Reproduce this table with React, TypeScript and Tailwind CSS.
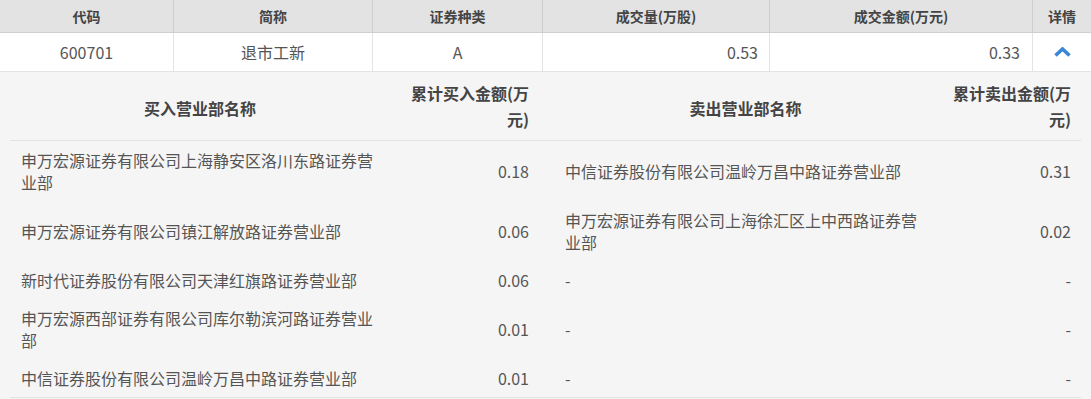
import React from 'react'

const buys = [
  { name: '申万宏源证券有限公司上海静安区洛川东路证券营业部', amt: '0.18' },
  { name: '申万宏源证券有限公司镇江解放路证券营业部', amt: '0.06' },
  { name: '新时代证券股份有限公司天津红旗路证券营业部', amt: '0.06' },
  { name: '申万宏源西部证券有限公司库尔勒滨河路证券营业部', amt: '0.01' },
  { name: '中信证券股份有限公司温岭万昌中路证券营业部', amt: '0.01' },
]

const sells = [
  { name: '中信证券股份有限公司温岭万昌中路证券营业部', amt: '0.31' },
  { name: '申万宏源证券有限公司上海徐汇区上中西路证券营业部', amt: '0.02' },
  { name: '-', amt: '-' },
  { name: '-', amt: '-' },
  { name: '-', amt: '-' },
]

const cols = 'grid grid-cols-[174px_199px_170px_227px_263px_58px]'

export default function App() {
  return (
    <div
      className="w-[1091px] h-[399px] bg-[#f5f5f5] text-[#555]"
      style={{ fontFamily: '"Noto Sans CJK SC", "Liberation Sans", sans-serif' }}
    >
      {/* summary table */}
      <div className={`${cols} h-[33px] bg-[#e3e3e3] border-b border-[#cfcfcf] text-[14px] font-bold text-[#444]`}>
        {['代码', '简称', '证券种类', '成交量(万股)', '成交金额(万元)', '详情'].map((h, i) => (
          <div
            key={h}
            className={`flex items-center justify-center ${i < 5 ? 'border-r border-[#cfcfcf]' : ''}`}
          >
            {h}
          </div>
        ))}
      </div>
      <div className={`${cols} h-[39px] bg-white border-b border-[#e3e3e3] text-[16px]`}>
        <div className="flex items-center justify-center border-r border-[#e3e3e3]">600701</div>
        <div className="flex items-center justify-center border-r border-[#e3e3e3]">退市工新</div>
        <div className="flex items-center justify-center border-r border-[#e3e3e3]">A</div>
        <div className="flex items-center justify-end pr-[11px] border-r border-[#e3e3e3]">0.53</div>
        <div className="flex items-center justify-end pr-[12px] border-r border-[#e3e3e3]">0.33</div>
        <div className="flex items-center justify-center">
          <svg width="17" height="10" viewBox="0 0 17 10">
            <polyline points="1.5,8.5 8.5,2 15.5,8.5" fill="none" stroke="#3b86d6" strokeWidth="3.6" />
          </svg>
        </div>
      </div>

      {/* detail */}
      <div className="px-[10px]">
        <div className="grid grid-cols-[380px_149px_407px_135px] border-b border-[#e3e3e3] text-[16px] font-bold text-[#444] leading-[26px]">
          <div className="flex items-center justify-center py-2 pt-[10px] pb-[6px]">买入营业部名称</div>
          <div className="flex items-center justify-end text-right py-2 pr-[10px]">累计买入金额(万元)</div>
          <div className="flex items-center justify-center pt-[10px] pb-[6px] pl-[26px] pr-[20px]">卖出营业部名称</div>
          <div className="flex items-center justify-end text-right py-2 pr-[10px]">累计卖出金额(万元)</div>
        </div>
        <div className="border-b border-[#e3e3e3]">
          {buys.map((b, i) => (
            <div key={i} className="grid grid-cols-[380px_149px_407px_135px] text-[16px] leading-[22px]">
              <div className="flex items-center py-2 pl-[11px] pr-[9px]">{b.name}</div>
              <div className="flex items-center justify-end py-2 pr-[10px]">{b.amt}</div>
              <div className="flex items-center py-2 pl-[26px] pr-[20px]">{sells[i].name}</div>
              <div className="flex items-center justify-end py-2 pr-[10px]">{sells[i].amt}</div>
            </div>
          ))}
        </div>
      </div>
    </div>
  )
}
